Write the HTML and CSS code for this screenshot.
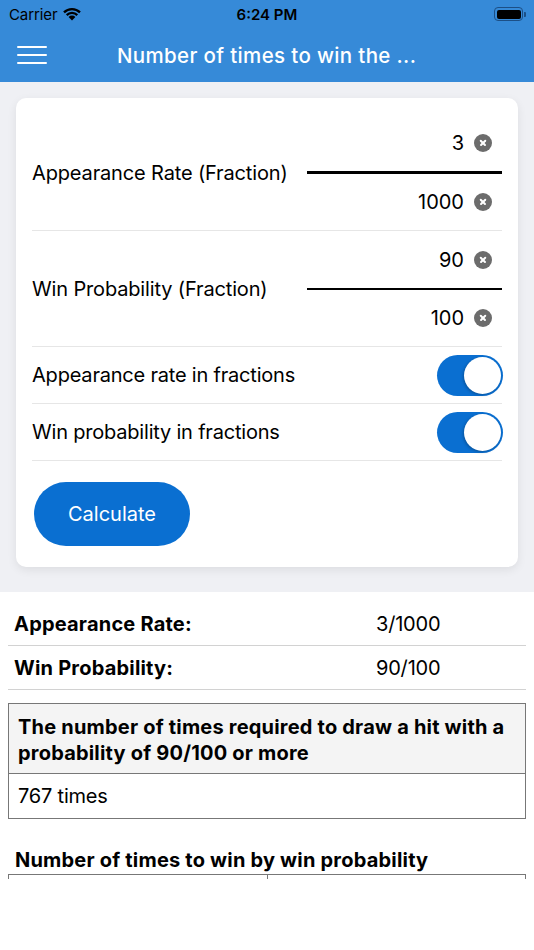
FILE: index.html
```html
<!DOCTYPE html>
<html>
<head>
<meta charset="utf-8">
<link rel="stylesheet" href="styles.css">
</head>
<body>
<div class="app">
  <header class="header">
    <div class="status">
      <div class="status-left">
        <span class="carrier">Carrier</span>
        <svg class="wifi" width="20" height="15" viewBox="0 0 20 15">
          <path d="M10 14.5 L6.6 11 A4.8 4.8 0 0 1 13.4 11 Z" fill="#000"/>
          <path d="M3.9 8.3 A8.6 8.6 0 0 1 16.1 8.3 L14.5 9.9 A6.4 6.4 0 0 0 5.5 9.9 Z" fill="#000"/>
          <path d="M1.2 5.6 A12.4 12.4 0 0 1 18.8 5.6 L17.2 7.2 A10.2 10.2 0 0 0 2.8 7.2 Z" fill="#000"/>
        </svg>
      </div>
      <div class="time">6:24 PM</div>
      <div class="battery"><div class="battery-body"><div class="battery-fill"></div></div><div class="battery-tip"></div></div>
    </div>
    <nav class="navbar">
      <div class="hamburger"><span></span><span></span><span></span></div>
      <h1 class="title">Number of times to win the ...</h1>
    </nav>
  </header>

  <main class="scroll">
    <section class="form-area">
      <div class="card">
        <div class="frow">
          <div class="flabel">Appearance Rate (Fraction)</div>
          <div class="fraction">
            <div class="fval">3<span class="clear"></span></div>
            <div class="fbar"></div>
            <div class="fval">1000<span class="clear"></span></div>
          </div>
        </div>
        <div class="frow">
          <div class="flabel">Win Probability (Fraction)</div>
          <div class="fraction">
            <div class="fval">90<span class="clear"></span></div>
            <div class="fbar"></div>
            <div class="fval">100<span class="clear"></span></div>
          </div>
        </div>
        <div class="trow">
          <div class="tlabel">Appearance rate in fractions</div>
          <div class="toggle"><div class="knob"></div></div>
        </div>
        <div class="trow">
          <div class="tlabel">Win probability in fractions</div>
          <div class="toggle"><div class="knob"></div></div>
        </div>
        <div class="btn-wrap">
          <button class="calc">Calculate</button>
        </div>
      </div>
    </section>

    <section class="results">
      <div class="rrow"><div class="rkey">Appearance Rate:</div><div class="rval">3/1000</div></div>
      <div class="rrow"><div class="rkey">Win Probability:</div><div class="rval">90/100</div></div>

      <div class="box">
        <div class="box-head">The number of times required to draw a hit with a probability of 90/100 or more</div>
        <div class="box-body">767 times</div>
      </div>

      <h2 class="subhead">Number of times to win by win probability</h2>
      <div class="grid-table">
        <div class="gcell"></div>
        <div class="gcell"></div>
      </div>
    </section>
  </main>
  <footer class="footer"></footer>
</div>
</body>
</html>
```

FILE: styles.css
```css
* { box-sizing: border-box; }
html, body { margin: 0; padding: 0; }
body {
  font-family: "Inter", "Roboto", "Liberation Sans", sans-serif;
  color: #000;
  background: #fff;
}
.app {
  width: 534px;
  height: 950px;
  display: flex;
  flex-direction: column;
  overflow: hidden;
}
.header {
  background: #368ad8;
  height: 82px;
  flex: none;
}
.status {
  height: 28px;
  display: flex;
  align-items: center;
  justify-content: space-between;
  padding: 0 8px 0 9px;
  position: relative;
}
.status-left { display: flex; align-items: center; gap: 5px; }
.carrier { font-size: 15px; letter-spacing: -0.1px; }
.wifi { margin-top: -1px; }
.time {
  position: absolute;
  left: 0; right: 0;
  text-align: center;
  font-size: 15px;
  font-weight: 600;
  pointer-events: none;
}
.battery { display: flex; align-items: center; }
.battery-body {
  width: 29px; height: 14px;
  border: 1.5px solid #1c4f86;
  border-radius: 4px;
  padding: 1.5px;
}
.battery-fill { width: 100%; height: 100%; background: #000; border-radius: 2px; }
.battery-tip { width: 2px; height: 5px; background: #1c4f86; border-radius: 0 1px 1px 0; margin-left: 1px; }

.navbar {
  height: 54px;
  display: flex;
  align-items: center;
  padding-left: 17px;
}
.hamburger {
  width: 30px;
  display: flex;
  flex-direction: column;
  gap: 5.5px;
  margin-top: 0;
}
.hamburger span { display: block; height: 2.5px; background: #fff; border-radius: 1px; }
.title {
  margin: 0 0 0 70px;
  font-size: 20.5px;
  font-weight: 500;
  color: #fff;
  letter-spacing: 0.35px;
}

.scroll {
  flex: none;
  height: 797px;
  overflow: hidden;
}
.form-area {
  background: #eff0f4;
  padding: 16px 16px 25px;
}
.card {
  background: #fff;
  border-radius: 10px;
  box-shadow: 0 3px 10px rgba(0,0,0,0.08);
  padding: 16px 16px 21px;
}
.frow {
  display: flex;
  align-items: center;
  justify-content: space-between;
  padding: 14px 0 13px;
  border-bottom: 1px solid #e6e6e6;
}
.flabel { font-size: 20px; letter-spacing: -0.15px; padding-top: 1px; }
.fraction { width: 195px; }
.fval {
  height: 30px;
  display: flex;
  align-items: center;
  justify-content: flex-end;
  font-size: 20px;
  padding-right: 10px;
}
.clear {
  width: 18px; height: 18px;
  border-radius: 50%;
  background: #6c6c6c;
  margin-left: 10px;
  position: relative;
}
.clear::before, .clear::after {
  content: "";
  position: absolute;
  left: 5px; top: 8.25px;
  width: 8px; height: 1.6px;
  background: #fff;
  border-radius: 1px;
  transform: rotate(45deg);
}
.clear::after { transform: rotate(-45deg); }
.fbar { height: 2.5px; background: #000; margin: 13px 0; }

.trow {
  height: 57px;
  display: flex;
  align-items: center;
  justify-content: space-between;
  border-bottom: 1px solid #e6e6e6;
}
.tlabel { font-size: 20px; letter-spacing: -0.2px; }
.toggle {
  width: 66px; height: 41px;
  border-radius: 21px;
  background: #0a6fd1;
  position: relative;
  margin-right: -1px;
}
.knob {
  position: absolute;
  right: 2px; top: 2px;
  width: 37px; height: 37px;
  border-radius: 50%;
  background: #fff;
  box-shadow: -1px 1px 3px rgba(0,0,0,0.25);
}
.btn-wrap { padding: 21px 0 0 2px; }
.calc {
  width: 156px; height: 64px;
  border: none;
  border-radius: 32px;
  background: #0a6fd1;
  color: #fff;
  font-family: inherit;
  font-size: 20px;
  letter-spacing: 0;
}

.results { padding: 10px 8px 0; }
.rrow {
  height: 44px;
  display: flex;
  align-items: center;
  border-bottom: 1.5px solid #d2d2d2;
  font-size: 20px;
}
.rkey { width: 368px; padding-left: 6px; font-weight: 700; letter-spacing: 0.2px; }
.rval { letter-spacing: -0.2px; }
.box {
  margin-top: 13px;
  border: 1.5px solid #777;
}
.box-head {
  background: #f4f4f4;
  padding: 10px 9px 7px;
  font-size: 20px;
  font-weight: 700;
  line-height: 26px;
  letter-spacing: 0.2px;
  border-bottom: 1.5px solid #777;
}
.box-body {
  padding: 9px 9px;
  font-size: 20px;
  line-height: 26px;
  letter-spacing: -0.2px;
}
.subhead {
  margin: 28px 0 0 7px;
  font-size: 20px;
  font-weight: 700;
  line-height: 26px;
  letter-spacing: 0.2px;
}
.grid-table {
  margin-top: 1px;
  display: grid;
  grid-template-columns: 259px 1fr;
  border: 1.5px solid #777;
  border-bottom: none;
  height: 40px;
}
.gcell:first-child { border-right: 1.5px solid #777; }
.footer { flex: 1; background: #fff; }
```
